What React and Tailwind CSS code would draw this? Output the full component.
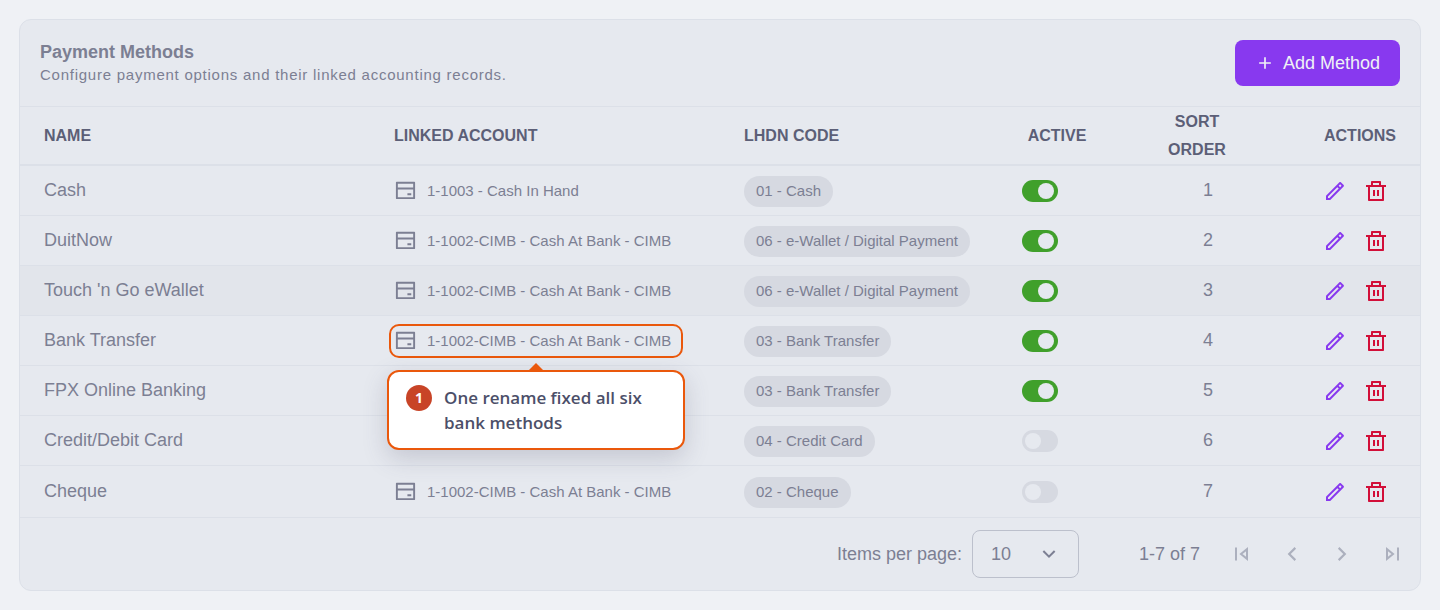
import React, { useState } from 'react';
import {
  RiAddLine,
  RiArrowDownSLine,
  RiArrowLeftSLine,
  RiArrowRightSLine,
  RiBankCardLine,
  RiDeleteBinLine,
  RiPencilLine,
} from 'react-icons/ri';

const BANK = '1-1002-CIMB - Cash At Bank - CIMB';

const initialMethods = [
  { name: 'Cash', account: '1-1003 - Cash In Hand', code: '01 - Cash', active: true },
  { name: 'DuitNow', account: BANK, code: '06 - e-Wallet / Digital Payment', active: true },
  { name: "Touch 'n Go eWallet", account: BANK, code: '06 - e-Wallet / Digital Payment', active: true, hovered: true },
  { name: 'Bank Transfer', account: BANK, code: '03 - Bank Transfer', active: true, note: true },
  { name: 'FPX Online Banking', account: BANK, code: '03 - Bank Transfer', active: true, covered: true },
  { name: 'Credit/Debit Card', account: BANK, code: '04 - Credit Card', active: false, covered: true },
  { name: 'Cheque', account: BANK, code: '02 - Cheque', active: false },
];

const SkipIcon = ({ className }) => (
  <svg viewBox="0 0 24 24" className={className} fill="none" stroke="currentColor" strokeWidth="2" aria-hidden="true">
    <path d="M6 5.5v13" />
    <path d="M17 7.2v9.6L11 12z" />
  </svg>
);

const Callout = () => (
  <>
    <div className="pointer-events-none absolute -inset-y-[5px] -right-3 -left-[5px] rounded-[10px] border-2 border-[#ea580c]" />
    <div
      role="note"
      className="absolute top-[41px] -left-[7px] z-10 flex w-[298px] gap-3 rounded-xl border-2 border-[#ea580c] bg-white px-[17px] py-[13px] whitespace-normal shadow-[0_8px_24px_rgba(76,79,105,0.22)]"
    >
      <span className="absolute -top-[9px] left-1/2 h-0 w-0 -translate-x-1/2 border-x-8 border-b-8 border-x-transparent border-b-[#ea580c]" />
      <span className="flex h-[26px] w-[26px] shrink-0 items-center justify-center rounded-full bg-[#c84427] font-['Open_Sans',sans-serif] text-sm font-bold text-white">
        1
      </span>
      <p className="font-['Open_Sans',sans-serif] text-[17px] leading-[25px] font-semibold text-[#4c4f69]">
        One rename fixed all six bank methods
      </p>
    </div>
  </>
);

const MethodRow = ({ method, order, onToggle }) => (
  <tr className={`h-[50px] border-b border-[#dce0e8] last:h-[52px] ${method.hovered ? 'bg-[#e2e5eb]' : ''}`}>
    <td className="px-6 text-lg">{method.name}</td>
    <td className="px-6">
      {/* the open callout takes the place of these two accounts */}
      {!method.covered && (
        <div className="relative inline-flex items-center gap-[10px] align-middle whitespace-nowrap">
          <RiBankCardLine className="h-[23px] w-[23px] shrink-0" />
          <span>{method.account}</span>
          {method.note && <Callout />}
        </div>
      )}
    </td>
    <td className="px-6 pt-0.5">
      <span className="inline-flex h-[31px] items-center rounded-full bg-[#d6d9e1] px-3 align-middle whitespace-nowrap">
        {method.code}
      </span>
    </td>
    <td className="px-[22px] pt-0.5">
      <input
        type="checkbox"
        role="switch"
        aria-label={`${method.name} active`}
        checked={method.active}
        onChange={onToggle}
        className="relative block h-[22px] w-9 cursor-pointer appearance-none rounded-full bg-[#d6d9e1] before:absolute before:top-[3px] before:left-[3px] before:h-4 before:w-4 before:rounded-full before:bg-[#e6e9ef] checked:bg-[#40a02b] checked:before:left-4"
      />
    </td>
    <td className="pr-[26px] pl-[22px] text-center text-lg">{order}</td>
    <td className="px-6 pt-0.5">
      <div className="flex justify-end">
        <button type="button" aria-label={`Edit ${method.name}`} className="flex h-10 w-[41px] items-center justify-center text-[#8839ef]">
          <RiPencilLine className="h-6 w-6" />
        </button>
        <button type="button" aria-label={`Delete ${method.name}`} className="flex h-10 w-[41px] items-center justify-center text-[#d20f39]">
          <RiDeleteBinLine className="h-6 w-6" />
        </button>
      </div>
    </td>
  </tr>
);

const Pagination = () => (
  <div className="flex h-[72px] items-center justify-end pr-[3px] text-lg">
    <label htmlFor="page-size">Items per page:</label>
    <div className="relative ml-[10px]">
      <select
        id="page-size"
        defaultValue="10"
        className="block h-12 w-[107px] appearance-none rounded-lg border border-[#bcc0cc] bg-transparent pl-[18px]"
      >
        <option>10</option>
        <option>25</option>
        <option>50</option>
      </select>
      <RiArrowDownSLine className="pointer-events-none absolute top-3 right-[18px] h-6 w-6" />
    </div>
    <span className="ml-[60px]">1-7 of 7</span>
    <div className="ml-[17px] flex text-[#acb0be]">
      <button type="button" aria-label="First page" disabled className="flex h-12 w-[50px] items-center justify-center">
        <SkipIcon className="h-6 w-6" />
      </button>
      <button type="button" aria-label="Previous page" disabled className="flex h-12 w-[50px] items-center justify-center">
        <RiArrowLeftSLine className="h-[26px] w-[26px]" />
      </button>
      <button type="button" aria-label="Next page" disabled className="flex h-12 w-[50px] items-center justify-center">
        <RiArrowRightSLine className="h-[26px] w-[26px]" />
      </button>
      <button type="button" aria-label="Last page" disabled className="flex h-12 w-[50px] items-center justify-center">
        <SkipIcon className="h-6 w-6 rotate-180" />
      </button>
    </div>
  </div>
);

export default function App() {
  const [methods, setMethods] = useState(initialMethods);

  const toggle = (index) =>
    setMethods(methods.map((m, i) => (i === index ? { ...m, active: !m.active } : m)));

  return (
    <main className="min-h-screen bg-[#eff1f5] p-[19px] font-['Liberation_Sans',Arial,sans-serif] text-[15px] leading-6 text-[#7c7f93]">
      <section className="rounded-xl border border-[#dce0e8] bg-[#e6e9ef]">
        <header className="flex items-center justify-between border-b border-[#dce0e8] px-5 py-5">
          <div>
            <h1 className="text-lg leading-6 font-bold">Payment Methods</h1>
            <p className="leading-[22px] tracking-wider">Configure payment options and their linked accounting records.</p>
          </div>
          <button type="button" className="flex h-[46px] items-center gap-2 rounded-lg bg-[#8839ef] px-5 text-lg text-[#eff1f5]">
            <RiAddLine className="h-5 w-5" />
            Add Method
          </button>
        </header>

        <table className="w-full table-fixed border-collapse">
          <thead>
            <tr className="h-[58px] border-b-2 border-[#dce0e8] text-base leading-7 text-[#5c5f77] uppercase">
              <th className="w-1/4 px-6 text-left">Name</th>
              <th className="w-1/4 px-6 text-left">Linked Account</th>
              <th className="w-1/5 px-6 text-left">LHDN Code</th>
              <th className="w-1/10 pr-[50px] pl-6">Active</th>
              <th className="w-1/10 pr-[50px] pl-6">Sort Order</th>
              <th className="w-1/10 px-6 text-right">Actions</th>
            </tr>
          </thead>
          <tbody>
            {methods.map((method, i) => (
              <MethodRow key={method.name} method={method} order={i + 1} onToggle={() => toggle(i)} />
            ))}
          </tbody>
        </table>

        <Pagination />
      </section>
    </main>
  );
}
